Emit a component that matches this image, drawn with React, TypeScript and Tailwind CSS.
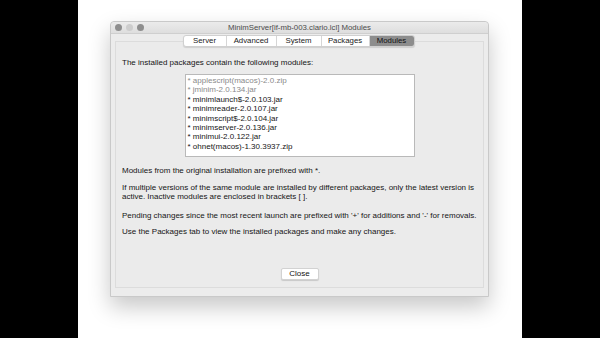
import React from 'react'

const tabs = ['Server', 'Advanced', 'System', 'Packages', 'Modules']

const modules = [
  '* applescript(macos)-2.0.zip',
  '* jminim-2.0.134.jar',
  '* minimlaunch$-2.0.103.jar',
  '* minimreader-2.0.107.jar',
  '* minimscript$-2.0.104.jar',
  '* minimserver-2.0.136.jar',
  '* minimui-2.0.122.jar',
  '* ohnet(macos)-1.30.3937.zip',
]

const tabWidth: Record<string, string> = {
  Server: 'w-[42px]',
  Advanced: 'w-[50px]',
  System: 'w-[45px]',
  Packages: 'w-[48px]',
  Modules: 'w-[45px]',
}

export default function App() {
  return (
    <div className="flex h-[338px] w-[600px] bg-black font-['Liberation_Sans',Arial,sans-serif] text-[#151515]">
      <div className="w-[78px]" />
      <div className="flex-1 bg-white pl-[32px] pt-[21px]">
        <div className="flex h-[276px] w-[379px] flex-col rounded-t-[4px] border border-[#c9c9c9] bg-[#ececec] shadow-[0_10px_22px_rgba(0,0,0,0.22)]">
          {/* title bar */}
          <div className="relative flex h-[12px] items-center justify-center rounded-t-[4px] border-b border-[#cfcfcf] bg-gradient-to-b from-[#ebebeb] to-[#dedede]">
            <div className="absolute left-[4px] top-[2px] flex gap-[4px]">
              <span className="h-[7px] w-[7px] rounded-full bg-[#8e8e8e]" />
              <span className="h-[7px] w-[7px] rounded-full bg-[#cdcdcd]" />
              <span className="h-[7px] w-[7px] rounded-full bg-[#8e8e8e]" />
            </div>
            <span className="text-[7.8px] leading-none text-[#4b4b4b]">MinimServer[if-mb-003.clario.lcl] Modules</span>
          </div>

          {/* tabs */}
          <div className="relative z-10 mt-[1px] -mb-[6px] flex justify-center pr-[2px]">
            <div className="flex h-[12px] overflow-hidden rounded-[3px] border border-[#d0d0d0] bg-white shadow-[0_1px_1px_rgba(0,0,0,0.12)]">
              {tabs.map((t, i) => (
                <div
                  key={t}
                  className={
                    (t === 'Modules' ? 'bg-[#8d8d8d] text-[#111] ' : 'text-[#222] ') +
                    (i > 0 ? 'border-l border-[#d6d6d6] ' : '') +
                    tabWidth[t] +
                    ' flex items-center justify-center text-[7.8px] leading-none'
                  }
                >
                  {t}
                </div>
              ))}
            </div>
          </div>

          {/* group box */}
          <div className="mx-[4px] flex h-[247px] flex-col border border-[#dcdcdc] bg-[#ebebeb] px-[6px] pt-[16px]">
            <p className="text-[8px] leading-[9px]">The installed packages contain the following modules:</p>
            <div className="mx-auto mt-[7px] flex h-[83px] w-[230px] flex-col border border-[#b9b9b9] bg-white px-[2px] pt-[1px]">
              {modules.map((m, i) => (
                <div key={m} className={(i < 2 ? 'text-[#8a8a8a] ' : 'text-[#151515] ') + 'text-[8px] leading-[9.4px]'}>
                  {m}
                </div>
              ))}
            </div>
            <p className="mt-[9px] text-[8px] leading-[9px]">Modules from the original installation are prefixed with *.</p>
            <p className="mt-[9px] text-[8px] leading-[8.5px]">
              If multiple versions of the same module are installed by different packages, only the latest version is active. Inactive modules are enclosed in brackets [ ].
            </p>
            <p className="mt-[10px] text-[8px] leading-[9px]">
              Pending changes since the most recent launch are prefixed with '+' for additions and '-' for removals.
            </p>
            <p className="mt-[7px] text-[8px] leading-[9px]">Use the Packages tab to view the installed packages and make any changes.</p>
            <div className="mt-[32px] flex justify-center">
              <button className="flex h-[12px] w-[38px] items-center justify-center rounded-[2px] border border-[#d2d2d2] bg-white text-[8px] leading-none text-[#111] shadow-[0_1px_1px_rgba(0,0,0,0.15)]">
                Close
              </button>
            </div>
          </div>
        </div>
      </div>
      <div className="w-[78px]" />
    </div>
  )
}
